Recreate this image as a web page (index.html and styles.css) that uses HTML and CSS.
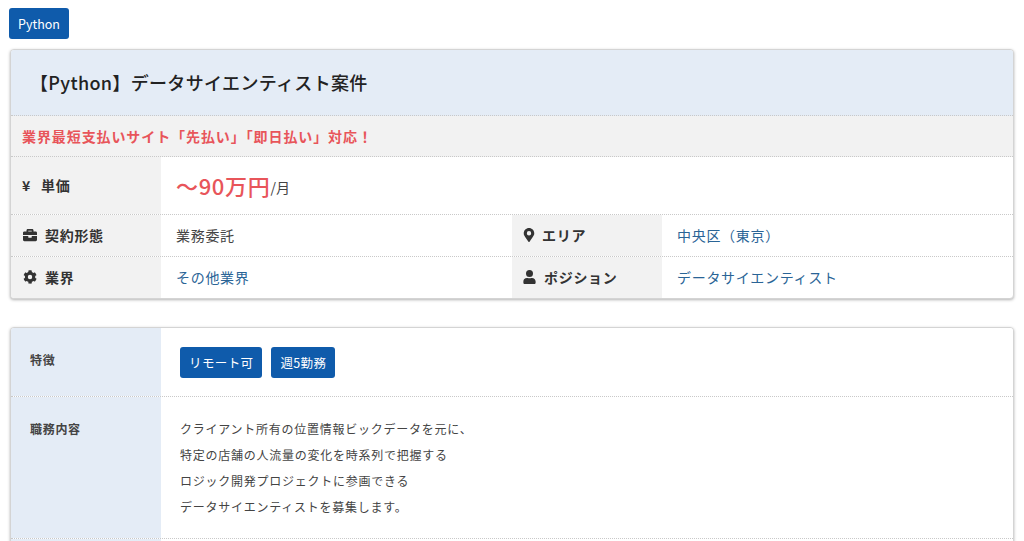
FILE: index.html
```html
<!DOCTYPE html>
<html lang="ja">
<head>
<meta charset="utf-8">
<title>【Python】データサイエンティスト案件</title>
<link rel="stylesheet" href="styles.css">
</head>
<body>
<div class="page">
  <div class="tags"><a class="tag tag-top">Python</a></div>

  <section class="card">
    <h1 class="title">【Python】データサイエンティスト案件</h1>
    <p class="notice">業界最短支払いサイト「先払い」「即日払い」対応！</p>
    <div class="row row-price">
      <div class="label"><span class="yen">¥</span>単価</div>
      <div class="value"><span class="price">〜90万円</span><span class="unit">/月</span></div>
    </div>
    <div class="row row-half">
      <div class="label">
        <svg class="icon" viewBox="0 0 512 512"><path d="M320 336c0 8.800-7.200 16-16 16h-96c-8.800 0-16-7.200-16-16v-48H0v144c0 25.600 22.400 48 48 48h416c25.600 0 48-22.400 48-48V288H320v48zm144-208h-80V80c0-25.600-22.400-48-48-48H176c-25.600 0-48 22.400-48 48v48H48c-25.600 0-48 22.400-48 48v80h512v-80c0-25.600-22.400-48-48-48zm-144 0H192V96h128v32z"/></svg>契約形態
      </div>
      <div class="value">業務委託</div>
      <div class="label label-second">
        <svg class="icon icon-narrow" viewBox="0 0 384 512"><path d="M172 501C27 291 0 269 0 192 0 86 86 0 192 0s192 86 192 192c0 77-27 99-172 309-10 14-30 14-40 0zm20-229a80 80 0 1 0 0-160 80 80 0 0 0 0 160z"/></svg>エリア
      </div>
      <div class="value"><a class="link">中央区（東京）</a></div>
    </div>
    <div class="row row-half">
      <div class="label">
        <svg class="icon" viewBox="0 0 512 512"><path d="M487 315l-42-25c4-23 4-46 0-69l42-25c5-3 7-9 5-14-11-35-30-67-54-93-4-4-10-5-14-2l-42 24c-18-15-38-27-60-34V28c0-6-4-11-9-12-36-8-74-8-108 0-5 1-9 6-9 12v49c-22 8-42 20-60 34L94 87c-5-3-11-2-14 2-24 26-43 58-54 93-2 5 0 11 5 14l42 25c-4 23-4 46 0 69l-42 25c-5 3-7 9-5 14 11 35 30 67 54 93 4 4 10 5 14 2l42-24c18 15 38 27 60 34v49c0 6 4 11 9 12 36 8 74 8 108 0 5-1 9-6 9-12v-49c22-8 42-20 60-34l42 24c5 3 11 2 14-2 24-26 43-58 54-93 2-5 0-11-5-14zM256 336a80 80 0 1 1 0-160 80 80 0 0 1 0 160z"/></svg>業界
      </div>
      <div class="value"><a class="link">その他業界</a></div>
      <div class="label label-second">
        <svg class="icon icon-person" viewBox="0 0 448 512"><path d="M224 256a128 128 0 1 0 0-256 128 128 0 0 0 0 256zm90 32h-17a174 174 0 0 1-146 0h-17A134 134 0 0 0 0 422v42c0 26 22 48 48 48h352c26 0 48-22 48-48v-42c0-74-60-134-134-134z"/></svg>ポジション
      </div>
      <div class="value"><a class="link">データサイエンティスト</a></div>
    </div>
  </section>

  <section class="card card-detail">
    <div class="drow drow-tags">
      <div class="dlabel">特徴</div>
      <div class="dvalue tags-inline"><a class="tag">リモート可</a><a class="tag">週5勤務</a></div>
    </div>
    <div class="drow drow-body">
      <div class="dlabel">職務内容</div>
      <div class="dvalue body-text">クライアント所有の位置情報ビックデータを元に、<br>特定の店舗の人流量の変化を時系列で把握する<br>ロジック開発プロジェクトに参画できる<br>データサイエンティストを募集します。</div>
    </div>
    <div class="drow drow-more">
      <div class="dlabel"></div>
      <div class="dvalue"></div>
    </div>
  </section>
</div>
</body>
</html>
```
FILE: styles.css
```css
* { box-sizing: border-box; }
html, body { margin: 0; padding: 0; height: 541px; overflow: hidden; background: #fff; }
body {
  font-family: "Noto Sans CJK JP", "Noto Sans", sans-serif;
  color: #333;
  letter-spacing: .05em;
  font-size: 14px;
}
.page { padding: 8px 10px 0; }
.tags { height: 31px; margin-bottom: 10px; display: flex; margin-left: -1px; }
.tag {
  display: inline-flex; align-items: center; justify-content: center;
  height: 31px; padding: 0 9px;
  background: #0f5bab; color: #fff;
  border-radius: 3px;
  font-size: 12.5px; letter-spacing: 0;
}
.card {
  border: 1px solid #d4d4d4;
  border-radius: 4px;
  box-shadow: 0 1px 3px rgba(0,0,0,.3);
  overflow: hidden;
  background: #fff;
}
.title {
  margin: 0; height: 66px; padding: 0 0 0 19px;
  background: #e4ecf6; color: #222;
  font-size: 18px; font-weight: 500; line-height: 64px;
  letter-spacing: .018em;
  border-bottom: 1px dotted #c9c9c9;
  white-space: nowrap;
}
.notice {
  margin: 0; height: 41px; padding-left: 11px;
  background: #f2f2f2; color: #e8555a;
  font-size: 14px; font-weight: 700; line-height: 41px;
  letter-spacing: .065em;
  border-bottom: 1px dotted #c9c9c9;
}
.row { display: grid; border-bottom: 1px dotted #c9c9c9; }
.row:last-child { border-bottom: 0; }
.row-price { grid-template-columns: 150px 1fr; height: 58px; }
.row-half { grid-template-columns: 150px 351px 150px 1fr; height: 42px; }
.row-half:last-child { height: 41px; }
.label {
  display: flex; align-items: center;
  padding: 0 0 2px 11px;
  background: #f2f2f2; color: #333;
  font-weight: 700; font-size: 14px;
}
.label-second { padding-left: 11px; }
.yen { margin-right: 10px; font-size: 14px; }
.icon { width: 16px; height: 14px; margin-right: 7px; fill: #333; flex: none; }
.icon-narrow { width: 12px; margin-right: 7px; }
.icon-person { width: 13px; margin-right: 8px; }
.value { display: flex; align-items: center; padding: 0 0 2px 15px; color: #444; }
.link { color: #2a6496; }
.price { color: #e8555a; font-size: 22px; font-weight: 500; letter-spacing: .03em; }
.unit { color: #444; font-size: 14px; letter-spacing: 0; margin-top: 5px; }
.card-detail { margin-top: 28px; height: 240px; }
.drow { display: grid; grid-template-columns: 150px 1fr; border-bottom: 1px dotted #c9c9c9; }
.drow-more { border-bottom: 0; height: 40px; }
.drow-tags { height: 69px; }
.drow-body { height: 142px; }
.dlabel {
  background: #e4ecf6; color: #444;
  font-size: 12px; font-weight: 700;
  padding: 22px 0 0 19px;
  line-height: 20px;
}
.dvalue { background: #fff; }
.tags-inline { display: flex; gap: 9px; padding: 19px 0 0 19px; }
.tags-inline .tag { font-size: 12.5px; letter-spacing: .03em; padding: 0 9px; }
.body-text { padding: 19px 0 0 19px; font-size: 12px; line-height: 26px; letter-spacing: .0625em; color: #444; white-space: nowrap; }
```
